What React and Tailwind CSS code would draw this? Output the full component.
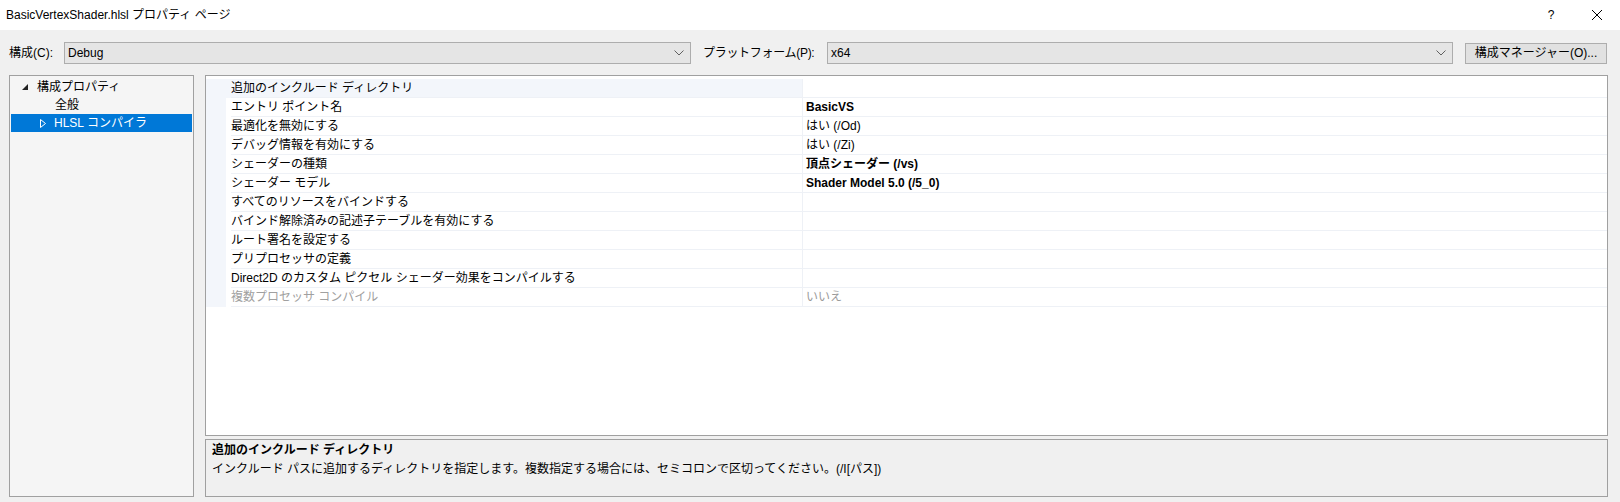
import React from 'react'

const rows = [
  { name: '追加のインクルード ディレクトリ', value: '', selected: true },
  { name: 'エントリ ポイント名', value: 'BasicVS', bold: true },
  { name: '最適化を無効にする', value: 'はい (/Od)' },
  { name: 'デバッグ情報を有効にする', value: 'はい (/Zi)' },
  { name: 'シェーダーの種類', value: '頂点シェーダー (/vs)', bold: true },
  { name: 'シェーダー モデル', value: 'Shader Model 5.0 (/5_0)', bold: true },
  { name: 'すべてのリソースをバインドする', value: '' },
  { name: 'バインド解除済みの記述子テーブルを有効にする', value: '' },
  { name: 'ルート署名を設定する', value: '' },
  { name: 'プリプロセッサの定義', value: '' },
  { name: 'Direct2D のカスタム ピクセル シェーダー効果をコンパイルする', value: '' },
  { name: '複数プロセッサ コンパイル', value: 'いいえ', disabled: true },
]

function Chevron() {
  return (
    <svg width="10" height="6" viewBox="0 0 10 6" className="shrink-0">
      <polyline points="0.5,0.5 5,5 9.5,0.5" fill="none" stroke="#606060" strokeWidth="1" />
    </svg>
  )
}

function Combo({ value, width }) {
  return (
    <div className={`${width} h-[22px] flex items-center justify-between bg-[#e5e5e5] border border-[#adadad] pl-[3px] pr-[6px]`}>
      <span className="text-[12px] text-black">{value}</span>
      <Chevron />
    </div>
  )
}

export default function App() {
  return (
    <div className="w-[1620px] h-[502px] bg-[#f0f0f0] flex flex-col font-['Liberation_Sans','Noto_Sans_CJK_JP',sans-serif] text-black overflow-hidden">
      {/* Title bar */}
      <div className="h-[30px] bg-white flex items-center justify-between pl-[6px] shrink-0">
        <span className="text-[12px]">BasicVertexShader.hlsl プロパティ ページ</span>
        <div className="flex items-center h-full">
          <span className="w-[46px] text-center text-[12px]">?</span>
          <div className="w-[46px] h-full flex items-center justify-center">
            <svg width="10" height="10" viewBox="0 0 10 10">
              <path d="M0 0 L10 10 M10 0 L0 10" stroke="#000" strokeWidth="1" />
            </svg>
          </div>
        </div>
      </div>

      {/* Configuration bar */}
      <div className="flex items-center pt-[12px] pl-[9px] shrink-0">
        <span className="text-[12px] w-[55px]">構成(C):</span>
        <Combo value="Debug" width="w-[627px]" />
        <span className="text-[12px] ml-[12px] w-[124px] tracking-[-0.3px]">プラットフォーム(P):</span>
        <Combo value="x64" width="w-[626px]" />
        <button className="ml-[12px] w-[142px] h-[21px] bg-[#e1e1e1] border border-[#adadad] text-[12px] flex items-center justify-center">
          構成マネージャー(O)...
        </button>
      </div>

      {/* Main area */}
      <div className="flex flex-1 min-h-0 pt-[11px] pb-[5px] pl-[9px] pr-[12px] gap-[11px]">
        {/* Tree */}
        <div className="w-[185px] bg-[#f5f5f5] border border-[#a0a0a0] pt-[2px] px-[1px] text-[12px]">
          <div className="h-[18px] flex items-center">
            <svg width="6" height="6" viewBox="0 0 6 6" className="ml-[11px]">
              <polygon points="6,0 6,6 0,6" fill="#222" />
            </svg>
            <span className="ml-[9px]">構成プロパティ</span>
          </div>
          <div className="h-[18px] flex items-center pl-[44px]">全般</div>
          <div className="h-[18px] flex items-center bg-[#0078d7] text-white">
            <svg width="6" height="9" viewBox="0 0 6 9" className="ml-[29px]">
              <polygon points="0.5,0.5 5.5,4.5 0.5,8.5" fill="none" stroke="#fff" strokeWidth="1" />
            </svg>
            <span className="ml-[8px]">HLSL コンパイラ</span>
          </div>
        </div>

        {/* Right column */}
        <div className="flex-1 flex flex-col gap-[3px] min-w-0">
          {/* Property grid */}
          <div className="flex-1 bg-white border border-[#a0a0a0] flex flex-col pt-[3px]">
            {rows.map((r, i) => (
              <div key={i} className="h-[19px] flex shrink-0">
                <div className={`w-[597px] flex items-center text-[12px] ${r.selected ? 'bg-[#f3f6fb]' : 'bg-white'} ${r.disabled ? 'text-[#a0a0a0]' : ''}`}>
                  <div className="w-[20px] self-stretch bg-[#f3f6fb] mr-[5px]" />
                  <div className="flex-1 self-stretch flex items-center border-b border-r border-[#eef1f6] whitespace-nowrap">
                    {r.name}
                  </div>
                </div>
                <div className={`flex-1 flex items-center pl-[3px] border-b border-[#eef1f6] text-[12px] ${r.bold ? 'font-bold' : ''} ${r.disabled ? 'text-[#9a9a9a]' : ''}`}>
                  {r.value}
                </div>
              </div>
            ))}
          </div>

          {/* Description */}
          <div className="h-[58px] shrink-0 bg-[#f0f0f0] border border-[#a0a0a0] pl-[6px] pt-[1px] text-[12px]">
            <div className="font-bold leading-[19px]">追加のインクルード ディレクトリ</div>
            <div className="leading-[19px]">インクルード パスに追加するディレクトリを指定します。複数指定する場合には、セミコロンで区切ってください。(/I[パス])</div>
          </div>
        </div>
      </div>
    </div>
  )
}
